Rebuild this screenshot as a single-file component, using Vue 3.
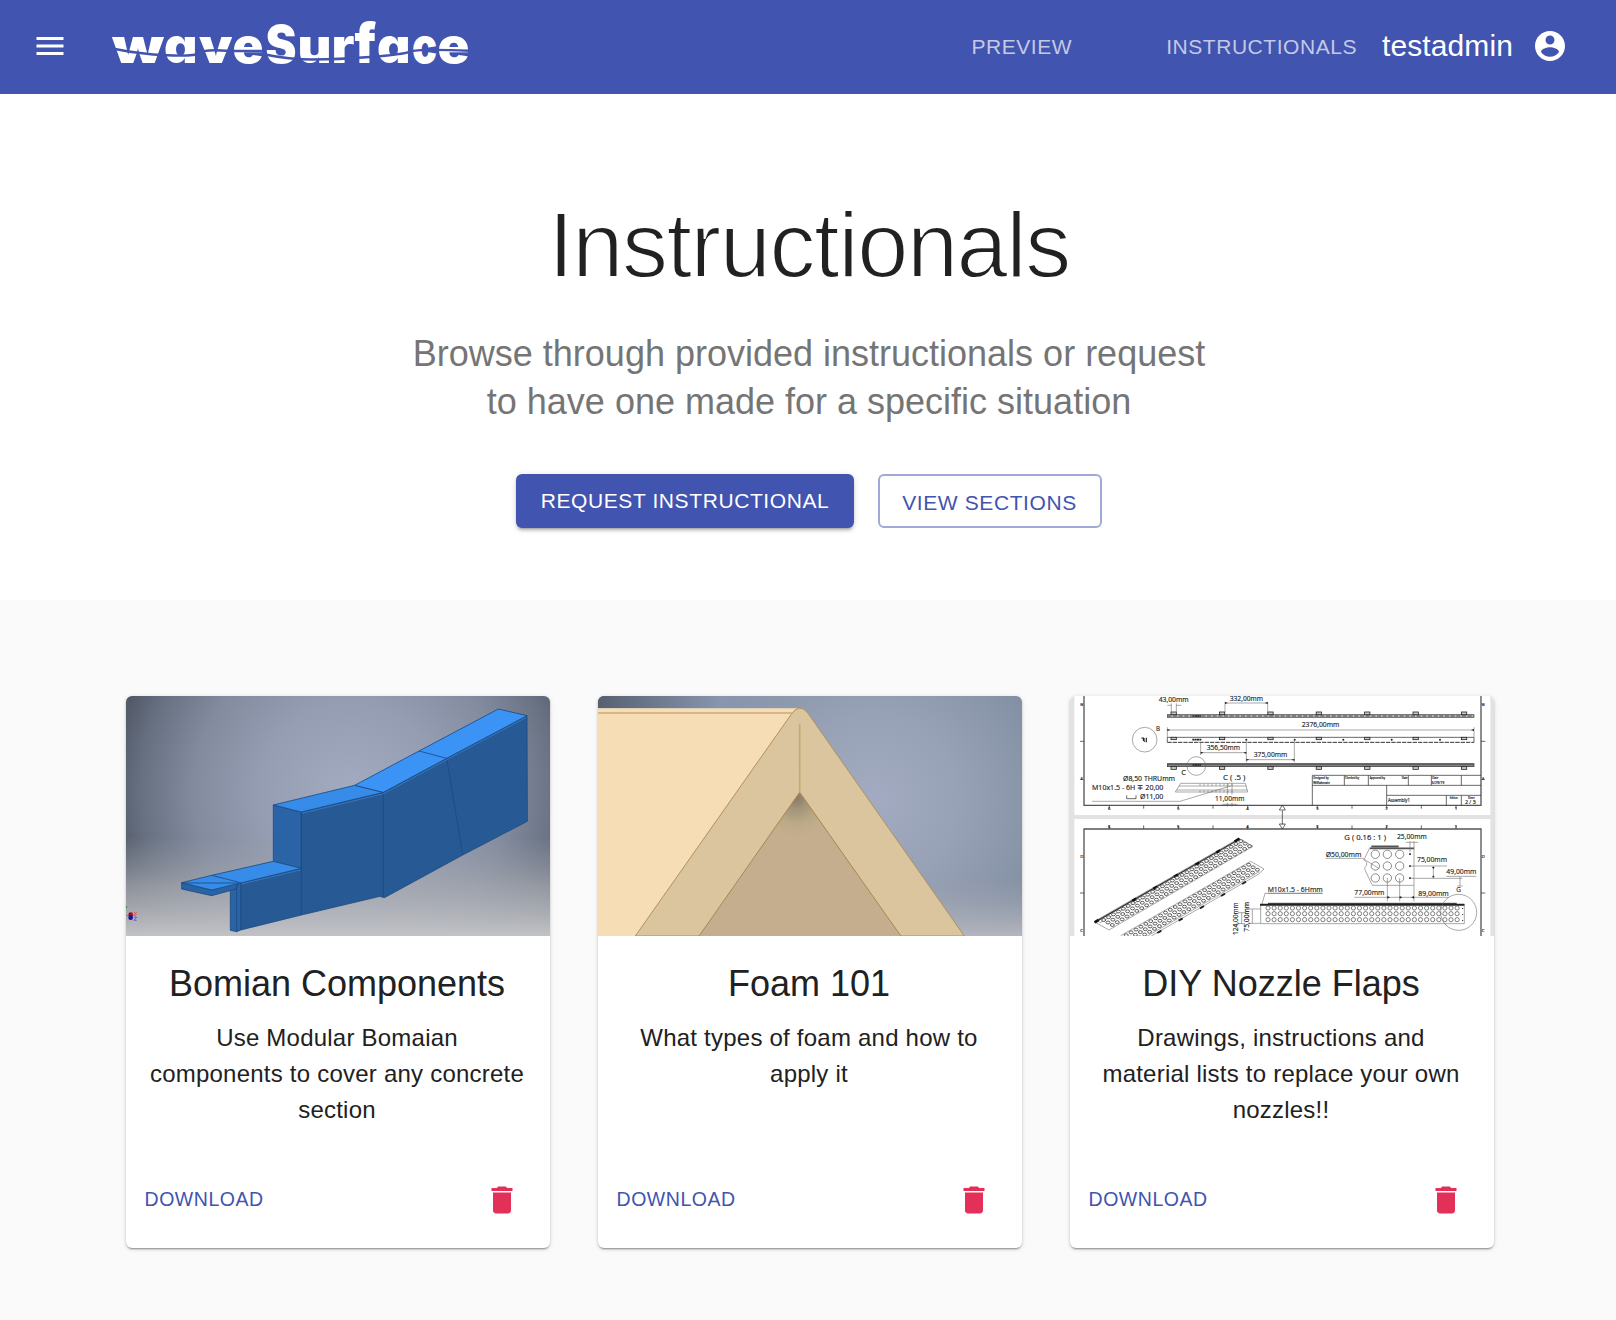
<script setup>
const cards = [
  { art: 'bomian', title: 'Bomian Components', text: 'Use Modular Bomaian\ncomponents to cover any concrete\nsection' },
  { art: 'foam', title: 'Foam 101', text: 'What types of foam and how to\napply it' },
  { art: 'nozzle', title: 'DIY Nozzle Flaps', text: 'Drawings, instructions and\nmaterial lists to replace your own\nnozzles!!' },
]

const range = (n) => Array.from({ length: n }, (_, i) => i)

// Wordmark letters: [letter, x, width, size]
const letters = [
  ['w', 3, 52, 48.5], ['a', 55, 33.5, 48.5], ['v', 90, 33.5, 48.5], ['e', 123.5, 31, 48.5],
  ['S', 156.5, 31, 52], ['u', 188.5, 34, 48.5], ['r', 222.5, 23, 48.5], ['f', 245.5, 21.5, 55.5],
  ['a', 268, 33.5, 48.5], ['c', 303, 25, 48.5], ['e', 328.5, 32, 48.5],
]

// Technical drawing: mounting tabs, ruler ticks, hole grids
const tabs = range(7).map((i) => 321 + i * 145.2)
const pins = [547, 692, 838, 983, 1128]
const ticks = [136, 239, 343, 447, 551, 760, 864, 968, 1072, 1176]
const zones = [[136, '6'], [343, '5'], [551, '4'], [760, '3'], [968, '2'], [1176, '1']]
const flatHoles = range(32).flatMap((c) => [654, 671, 689].map((y) => [612 + c * 18.3, y]))
const isoGrid = (x, y, cols) =>
  range(cols).flatMap((c) => range(3).map((r) => [x + c * 14.7 + r * 13, y - c * 8.45 + r * 7.5]))
const isoHoles = [...isoGrid(119, 690, 29), ...isoGrid(172, 744, 27)]
const detailHoles = [286, 322, 359].flatMap((x) => [118, 153, 189].map((y) => [x + 648, y + 375]))

// [text, x, baseline, width, size]
const notes = [
  ['43,00mm', 284, 37, 90, 23], ['332,00mm', 497, 33, 100, 23], ['B', 276, 124, 12, 21],
  ['2376,00mm', 713, 112, 113, 24], ['356,50mm', 428, 180, 100, 24], ['375,00mm', 569, 200, 101, 24],
  ['C', 352, 254, 14, 22], ['Ø8,50 THRUmm', 177, 273, 156, 24], ['M10x1.5 - 6H ∓ 20,00', 84, 300, 214, 23],
  ['Ø11,00', 228, 327, 70, 24], ['C ( .5 )', 477, 271, 67, 23], ['11,00mm', 453, 333, 88, 24],
  ['Assembly1', 972, 335, 66, 15], ['2 / 3', 1203, 341, 32, 17],
  ['Designed by', 748, 266, 46, 9], ['Wilfakerate', 748, 282, 50, 9], ['Checked by', 843, 266, 42, 9],
  ['Approved by', 917, 266, 46, 9], ['Date', 1013, 266, 18, 9], ['Date', 1105, 266, 18, 9],
  ['6/29/19', 1103, 282, 38, 11], ['Edition', 1157, 326, 24, 9], ['Sheet', 1212, 326, 20, 9],
  ['G ( 0.16 : 1 )', 841, 450, 125, 23], ['25,00mm', 999, 448, 89, 24], ['Ø50,00mm', 785, 501, 107, 24],
  ['75,00mm', 1059, 516, 90, 24], ['49,00mm', 1147, 552, 90, 24], ['77,00mm', 871, 616, 90, 24],
  ['89,00mm', 1063, 617, 91, 24], ['G', 1177, 605, 14, 22], ['M10x1.5 - 6Hmm', 611, 605, 165, 23],
]
const sideMarks = [['B', 49], ['A', 271], ['D', 504], ['C', 727]]
</script>

<template>
  <div class="page">
    <header class="bar">
      <svg class="icon menu" viewBox="0 0 24 24"><path d="M3 18h18v-2H3v2zm0-5h18v-2H3v2zm0-7v2h18V6H3z" /></svg>
      <svg class="logo" viewBox="0 0 370 60">
        <text v-for="(l, i) in letters" :key="i" :x="l[1]" y="46.7" :font-size="l[3]" :textLength="l[2]" lengthAdjust="spacingAndGlyphs">{{ l[0] }}</text>
        <path class="wave" d="M6 33Q30 38 58 39.3T91 36.7T121 35H154M156 38.5Q180 43.5 204 43.5T261 41T301 35.6T360 34.7" />
      </svg>
      <nav class="nav">
        <a class="preview">PREVIEW</a>
        <a class="instr">INSTRUCTIONALS</a>
        <span class="user">testadmin</span>
        <svg class="icon" viewBox="0 0 24 24"><path d="M12 2C6.48 2 2 6.48 2 12s4.48 10 10 10 10-4.48 10-10S17.52 2 12 2zm0 3c1.66 0 3 1.34 3 3s-1.34 3-3 3-3-1.34-3-3 1.34-3 3-3zm0 14.2c-2.5 0-4.71-1.28-6-3.22.03-1.99 4-3.08 6-3.08 1.99 0 5.97 1.09 6 3.08-1.29 1.94-3.5 3.22-6 3.22z" /></svg>
      </nav>
    </header>

    <section class="hero">
      <h1>Instructionals</h1>
      <p>Browse through provided instructionals or request<br />to have one made for a specific situation</p>
      <div class="buttons">
        <button class="btn solid">REQUEST INSTRUCTIONAL</button>
        <button class="btn outline">VIEW SECTIONS</button>
      </div>
    </section>

    <main class="cards">
      <article v-for="card in cards" :key="card.art" class="card">
        <svg v-if="card.art === 'bomian'" class="art" viewBox="18 18 1272 720" preserveAspectRatio="none">
          <defs>
            <radialGradient id="sky1" gradientUnits="userSpaceOnUse" cx="690" cy="310" r="780">
              <stop offset="0" stop-color="#a2abbf" /><stop offset=".35" stop-color="#949db1" />
              <stop offset=".6" stop-color="#838b9f" /><stop offset=".8" stop-color="#687182" /><stop offset="1" stop-color="#444b58" />
            </radialGradient>
            <linearGradient id="floor1" x1="0" y1="0" x2="0" y2="1">
              <stop offset="0" stop-color="#a0a3aa" stop-opacity="0" /><stop offset=".5" stop-color="#a9acb2" stop-opacity=".7" />
              <stop offset="1" stop-color="#c2c3c7" />
            </linearGradient>
          </defs>
          <rect x="18" y="18" width="1272" height="720" fill="url(#sky1)" />
          <rect x="18" y="440" width="1272" height="298" fill="url(#floor1)" />
          <g stroke="#1c4b82" stroke-width="2.5" stroke-linejoin="round">
            <path fill="#275a94" d="M544 366L790 307L980 205L1221 77L1222 394L1028 495L793 623L780 619L544 675L362 720V578L544 536Z" />
            <path fill="#2b64a6" d="M460 345L544 366V536L460 514Z" />
            <path fill="#2b64a6" d="M331 590L350 580L362 578V720L350 725L331 721Z" />
            <path fill="#2a63a5" d="M185 578L275 600L355 578L348 597L275 617L185 597Z" />
            <path fill="#368ce8" d="M185 578L275 556L460 514L544 535L362 579L275 600Z" />
            <path fill="#368ce8" d="M460 345L704 286L790 307L544 366Z" />
            <path fill="#3b94f5" d="M704 286L897 183L1135 57L1221 77L980 205L790 307Z" />
            <path fill="none" d="M185 579L352 579M275 556L362 578M897 183L980 205L1028 495M790 307V622M544 366V675M350 590V724M355 578L348 598" />
          </g>
          <path d="M546 370L791 311L982 208L1219 82M364 582L542 540" fill="none" stroke="#3477c2" stroke-width="3" />
          <path d="M18 649h3v6h-3z" fill="#1b9b36" /><path d="M18 677h30" stroke="#df4040" stroke-width="2" />
          <circle cx="32" cy="674" r="7" fill="#9b1026" /><circle cx="32" cy="683" r="7" fill="#1713a4" />
          <path d="M42 666l8 9m0-9l-8 9" stroke="#e24646" stroke-width="2" />
          <path d="M42 682h8l-8 9h8" fill="none" stroke="#4541d5" stroke-width="2" />
        </svg>

        <svg v-else-if="card.art === 'foam'" class="art" viewBox="24 18 1272 720" preserveAspectRatio="none">
          <defs>
            <radialGradient id="sky2" gradientUnits="userSpaceOnUse" cx="850" cy="330" r="850">
              <stop offset="0" stop-color="#a2abc1" /><stop offset=".3" stop-color="#98a2b6" /><stop offset=".55" stop-color="#8894a7" />
              <stop offset=".8" stop-color="#78849a" /><stop offset="1" stop-color="#5f6879" />
            </radialGradient>
            <linearGradient id="floor2" x1="0" y1="0" x2="0" y2="1">
              <stop offset="0" stop-color="#a0a4b0" stop-opacity="0" /><stop offset="1" stop-color="#b3b6bf" />
            </linearGradient>
            <linearGradient id="corner2">
              <stop offset="0" stop-color="#566070" /><stop offset=".6" stop-color="#8896ae" /><stop offset="1" stop-color="#8f9cb4" stop-opacity="0" />
            </linearGradient>
            <radialGradient id="shade2" gradientUnits="userSpaceOnUse" cx="618" cy="322" r="120">
              <stop offset="0" stop-color="#877a65" /><stop offset=".3" stop-color="#a3947a" /><stop offset=".65" stop-color="#bbaa86" /><stop offset="1" stop-color="#c5ae8e" />
            </radialGradient>
          </defs>
          <rect x="24" y="18" width="1272" height="720" fill="url(#sky2)" />
          <rect x="24" y="18" width="620" height="40" fill="url(#corner2)" />
          <rect x="24" y="560" width="1272" height="178" fill="url(#floor2)" />
          <path d="M24 56H628L590 130L160 738H24Z" fill="#f6ddb5" />
          <path d="M24 55.5H622" stroke="#ddcfb6" stroke-width="3" />
          <path d="M24 69H607" stroke="#cbaa77" stroke-width="4" />
          <path d="M136 738L603 74Q628 36 654 70L1123 738Z" fill="#dbc59e" stroke="#b2915b" stroke-width="3" />
          <path d="M326 740L629 307L934 740Z" fill="url(#shade2)" stroke="#a98551" stroke-width="3" />
          <path d="M629 101V307" stroke="#c5a976" stroke-width="5" />
        </svg>

        <svg v-else class="art drawing" viewBox="18 18 1272 720" preserveAspectRatio="none">
          <rect x="18" y="18" width="1272" height="720" fill="#e4e1e3" />
          <path d="M31 18H1279V375H31ZM31 387H1279V738H31Z" fill="#fff" />
          <path class="frame" d="M60 18V346H1251V18M60 738V417H1251V738" />
          <path class="line" d="M48 154H60M1251 154H1264M48 609H60M1251 609H1264M655 362V404M646 360L655 345L664 360ZM646 402L655 417L664 402Z" />
          <path v-for="t in ticks" :key="'t' + t" class="line" :d="`M${t} 346V356M${t} 406V417`" />
          <g class="tiny">
            <template v-for="z in zones" :key="z[1]">
              <text :x="z[0] - 4" y="359">{{ z[1] }}</text><text :x="z[0] - 4" y="414">{{ z[1] }}</text>
            </template>
            <template v-for="m in sideMarks" :key="m[0]">
              <text x="49" :y="m[1]">{{ m[0] }}</text><text x="1253" :y="m[1]">{{ m[0] }}</text>
            </template>
          </g>

          <!-- bars with tabs -->
          <rect x="310" y="74" width="920" height="8" fill="#b5b5b5" stroke="#444" stroke-width="2" />
          <path d="M310 78H1230" stroke="#444" stroke-width="3" stroke-dasharray="12 5" />
          <path class="line" d="M310 157V142H1230V157" />
          <path d="M310 157H1230" stroke="#333" stroke-width="3" stroke-dasharray="13 3" />
          <rect x="310" y="221" width="920" height="9" fill="#888" stroke="#333" stroke-width="2" />
          <path d="M310 224H1230" stroke="#444" stroke-width="2" />
          <g v-for="t in tabs" :key="'b' + t" class="tab">
            <rect :x="t" y="66" width="16" height="8" /><rect :x="t" y="142" width="16" height="7" /><rect :x="t" y="230" width="16" height="8" />
          </g>
          <circle v-for="p in pins" :key="'p' + p" :cx="p" cy="149" r="3" fill="#222" />
          <path d="M385 149h27M386 78h25M386 225h25" stroke="#222" stroke-width="5" stroke-dasharray="6 1" />
          <path class="thin" d="M310 46H322M337 46H352M322 40V66M337 40V66M483 39H611M483 35V66M611 35V66M310 120H1230M310 112V142M1230 112V142M410 188H547M410 157V195M547 149V217M547 209H691M691 149V217" />
          <path d="M483 36v6l9-3zM611 36v6l-9-3zM310 117v6l9-3zM1230 117v6l-9-3zM410 185v6l9-3zM547 185v6l-9-3zM547 206v6l9-3zM691 206v6l-9-3z" />
          <path class="thin" d="M84 334H348L500 288M350 280H544L551 306H334ZM345 288H547M338 300H550M490 280V314M504 280V314M490 338V350M504 338V350M475 343H520" />
          <path d="M407 284H510M407 304H510" stroke="#777" stroke-width="7" stroke-dasharray="2 10" fill="none" />
          <path class="line" d="M188 316V326H216V316" />
          <circle class="thin" cx="242" cy="149" r="37" /><circle class="thin" cx="397" cy="228" r="28" />
          <path d="M232 144h6v7l5 4M240 144v10M247 143v14" fill="none" stroke="#222" stroke-width="3.5" />
          <path class="line" d="M745 346V256H1251M745 286H1251M841 256V286M913 256V286M1033 256V286M1102 256V286M1192 256V286M968 286V346M968 316H1251M1147 316V346M1192 316V346" />

          <!-- perforated strips -->
          <path class="thin" d="M90 695L525 445L567 469L135 720ZM106 699L540 452" />
          <path d="M92 697L527 447" stroke="#333" stroke-width="4" />
          <path d="M92 697l12-7M205 633l12-7M268 597l12-7M330 561l12-7M394 525l12-7M457 488l12-7M512 455l14-9" stroke="#111" stroke-width="8" />
          <path class="thin" d="M170 737L560 514L600 537L583 553L262 738M586 545L250 738" />
          <path d="M280 729l12-7M344 692l12-7M408 655l12-7M471 618l12-7M534 582l12-7" stroke="#222" stroke-width="6" />
          <ellipse v-for="(h, i) in isoHoles" :key="'i' + i" class="hole iso" :cx="h[0]" :cy="h[1]" rx="6" ry="4.3" />

          <path class="thin" d="M590 642V701H1201V642" />
          <path d="M588 644H1201" stroke="#222" stroke-width="6" /><path d="M612 640H1178" stroke="#222" stroke-width="3" />
          <circle v-for="(h, i) in flatHoles" :key="'f' + i" class="hole" :cx="h[0]" :cy="h[1]" r="6.3" />
          <path d="M1196 654v40" stroke="#222" stroke-width="3" stroke-dasharray="3 15" />
          <circle class="thin" cx="1184" cy="667" r="54" />

          <!-- detail view -->
          <path class="thin" d="M918 472L900 509Q912 518 908 526Q898 532 904 542L925 586H1050V472" />
          <path d="M918 475H1050M922 469H1004" stroke="#555" stroke-width="5" />
          <circle v-for="(h, i) in detailHoles" :key="'d' + i" class="ring" :cx="h[0]" :cy="h[1]" r="12.5" />
          <path d="M1038 490v77" stroke="#222" stroke-width="5" stroke-dasharray="5 31" />
          <path class="thin" d="M785 505H896L946 536M970 564V634M1007 564V634M1050 586V634M871 622H1154M1038 528H1149M1108 528V565M1038 565H1195M1147 559H1237M1188 560V588M1180 588H1196M1038 453V486M1050 453V475M1026 457H1062M611 610H776M603 610H776M603 610L594 642M533 668V701M522 668H544M522 701H544M565 657V700M555 657H590M555 700H590" />
          <path d="M1104 531h8l-4 6zM1104 562h8l-4-6zM970 618v8l8-4zM1007 618v8l8-4zM1050 618v8l-8-4z" fill="#222" />
          <text v-for="(n, i) in notes" :key="'n' + i" :x="n[1]" :y="n[2]" :textLength="n[3]" :font-size="n[4]" lengthAdjust="spacingAndGlyphs">{{ n[0] }}</text>
          <text transform="translate(523 735) rotate(-90)" font-size="22" textLength="98" lengthAdjust="spacingAndGlyphs">124,00mm</text>
          <text transform="translate(556 725) rotate(-90)" font-size="22" textLength="89" lengthAdjust="spacingAndGlyphs">75,00mm</text>
        </svg>

        <div class="content">
          <h2>{{ card.title }}</h2>
          <p>{{ card.text }}</p>
        </div>
        <footer class="actions">
          <a>DOWNLOAD</a>
          <svg class="trash" viewBox="0 0 24 24"><path d="M6 19c0 1.1.9 2 2 2h8c1.1 0 2-.9 2-2V7H6v12zM19 4h-3.5l-1-1h-5l-1 1H5v2h14V4z" /></svg>
        </footer>
      </article>
    </main>
  </div>
</template>

<style>
body { margin: 0; background: #fafafa; }
</style>

<style scoped>
.page { width: 1616px; height: 1320px; overflow: hidden; background: #fafafa; color: #212121; font-family: "Liberation Sans", Arial, sans-serif; }
.bar { display: flex; align-items: center; height: 94px; box-sizing: border-box; padding: 0 48px 2px 32px; background: #4154af; }
.icon { width: 36px; height: 36px; fill: #fff; flex: none; }
.logo { width: 370px; height: 60px; margin-left: 41px; overflow: visible; fill: #fff; font-family: Inter, "Liberation Sans", sans-serif; font-weight: 900; font-feature-settings: "cv11"; }
.wave { fill: none; stroke: #4154af; stroke-width: 2.4; }
.nav { display: flex; align-items: center; margin-left: auto; color: #fff; }
.nav a { padding-top: 2px; font-size: 21px; letter-spacing: .55px; color: #c3c9e6; }
.preview { margin-right: 94px; }
.user { margin: 0 19px 0 25px; font-size: 30px; letter-spacing: .1px; }
.hero { height: 506px; box-sizing: border-box; padding: 97px 0 0 2px; background: #fff; text-align: center; }
h1 { margin: 0; font-size: 92px; line-height: 108px; font-weight: 400; letter-spacing: -1.45px; text-indent: 0; -webkit-text-stroke: 1.9px #fff; }
.hero p { margin: 31px 0 0; font-size: 36px; line-height: 48px; color: #757575; }
.buttons { display: flex; justify-content: center; gap: 24px; margin-top: 48px; }
.btn { height: 54px; padding: 0; border: 0; border-radius: 6px; font: 21px "Liberation Sans", Arial, sans-serif; letter-spacing: .6px; }
.solid { width: 338px; background: #4154af; color: #fff; box-shadow: 0 4px 2px -3px rgba(0, 0, 0, .2), 0 3px 3px rgba(0, 0, 0, .14), 0 1px 7px rgba(0, 0, 0, .12); }
.outline { width: 224px; padding: 4px 1px 0 0; background: #fff; border: 2px solid #a0a9d7; color: #4154af; }
.cards { display: flex; gap: 48px; padding: 96px 0 0 126px; }
.card { display: flex; flex-direction: column; width: 424px; height: 552px; overflow: hidden; border-radius: 6px; background: #fff; box-shadow: 0 3px 2px -2px rgba(0, 0, 0, .25), 0 1px 2px rgba(0, 0, 0, .2), 0 1px 5px rgba(0, 0, 0, .12); }
.art { display: block; width: 424px; height: 240px; flex: none; }
.content { flex: 1; padding: 24px 2px 24px 0; text-align: center; }
h2 { margin: 0; font-size: 36px; line-height: 48px; font-weight: 400; }
.content p { margin: 12px 0 0; font-size: 24px; line-height: 36px; letter-spacing: .225px; white-space: pre-line; }
.actions { display: flex; align-items: center; justify-content: space-between; height: 96px; padding: 0 30px 0 18.5px; }
.actions a { padding-bottom: 2px; font-size: 19.5px; letter-spacing: .55px; color: #4154af; }
.trash { width: 36px; height: 36px; fill: #e33058; }
.drawing { font-family: "Open Sans", "Noto Sans", sans-serif; font-weight: 500; fill: #222; }
.drawing text { stroke: #222; stroke-width: .5; }
.frame { fill: none; stroke: #555; stroke-width: 4; }
.line { fill: none; stroke: #333; stroke-width: 2.2; }
.thin { fill: none; stroke: #666; stroke-width: 1.7; }
.tab rect { fill: #ccc; stroke: #222; stroke-width: 2.4; }
.hole { fill: #fff; stroke: #444; stroke-width: 2; }
.iso { stroke-width: 2.6; }
.ring { fill: none; stroke: #555; stroke-width: 2; }
.tiny { font-size: 13px; }
</style>
